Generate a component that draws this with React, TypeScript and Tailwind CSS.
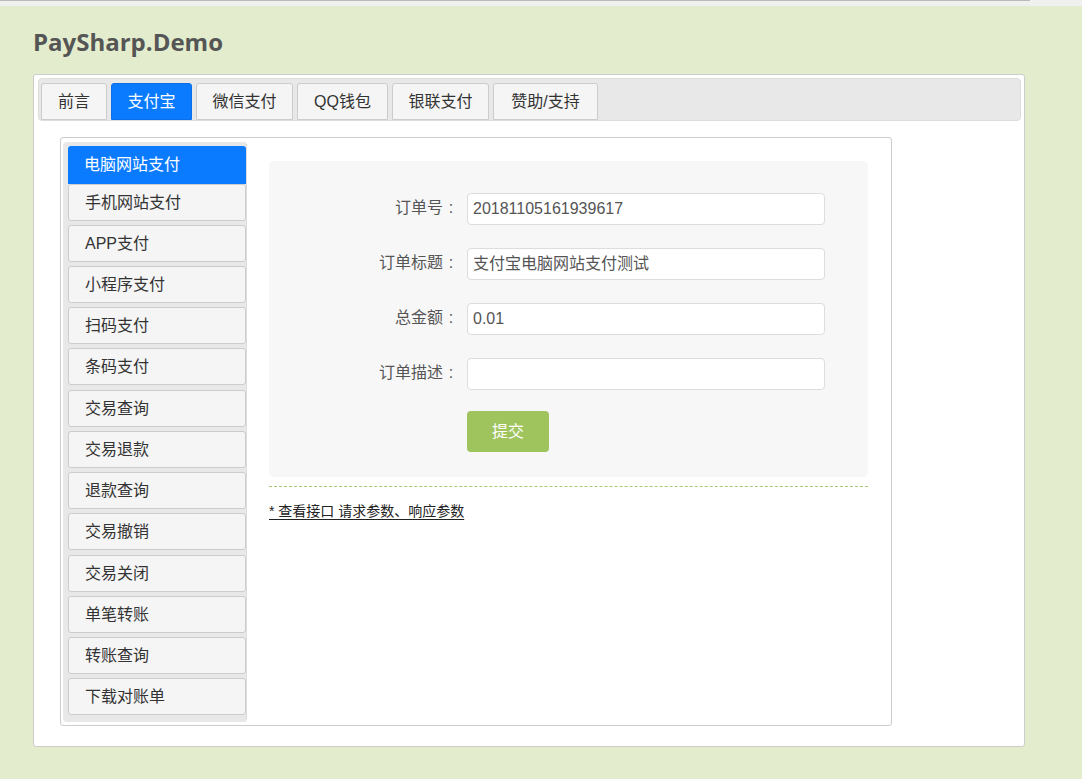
import React from "react";

const tabs: [string, number][] = [
  ["前言", 66],
  ["支付宝", 81],
  ["微信支付", 97],
  ["QQ钱包", 91],
  ["银联支付", 97],
  ["赞助/支持", 105],
];
const menu = [
  "电脑网站支付",
  "手机网站支付",
  "APP支付",
  "小程序支付",
  "扫码支付",
  "条码支付",
  "交易查询",
  "交易退款",
  "退款查询",
  "交易撤销",
  "交易关闭",
  "单笔转账",
  "转账查询",
  "下载对账单",
];

const fields: [string, string][] = [
  ["订单号", "20181105161939617"],
  ["订单标题", "支付宝电脑网站支付测试"],
  ["总金额", "0.01"],
  ["订单描述", ""],
];

export default function App() {
  return (
    <div
      className="min-h-screen w-full bg-[#e3edcd] text-[#333]"
      style={{ fontFamily: '"Liberation Sans", "Noto Sans CJK SC", sans-serif' }}
    >
      <div className="h-[6px] bg-[#f0f0f0]">
        <div className="h-px w-[1030px] bg-[#b9b9b9]" />
      </div>
      <div className="pl-[33px]">
        <h1
          className="mt-[21px] mb-[17px] text-[24px] leading-[30px] font-bold text-[#555]"
          style={{ fontFamily: '"Open Sans", sans-serif' }}
        >
          PaySharp.Demo
        </h1>
        <div className="w-[992px] h-[673px] rounded-[3px] border border-[#cccccc] bg-white pl-[4px] pr-[3px] pt-[3px]">
          <div className="flex gap-[4px] rounded-[4px] border border-[#dddddd] bg-[#e8e8e8] pl-[2px] pt-[4px]">
            {tabs.map(([t, w], i) => (
              <div
                key={t}
                style={{ width: w }}
                className={
                  "h-[37px] flex items-center justify-center rounded-t-[3px] border text-[16px] leading-[20px] " +
                  (i === 1
                    ? "bg-[#0a7bff] border-[#0a6fe8] text-white"
                    : "bg-[#f5f5f5] border-[#cccccc] text-[#333]")
                }
              >
                {t}
              </div>
            ))}
          </div>
          <div className="ml-[22px] mt-[16px] w-[832px] h-[589px] rounded-[3px] border border-[#cccccc] flex items-start">
            <div className="ml-[2px] mt-[4px] w-[184px] rounded-[4px] border-r border-[#dddddd] bg-[#e8e8e8] pl-[5px] pt-[4px] pb-[7px]">
              {menu.map((m, i) => (
                <div
                  key={m}
                  className={
                    "w-[178px] flex items-center pl-[16px] rounded-[3px] text-[16px] leading-[20px] " +
                    (i === 0
                      ? "h-[38px] bg-[#0a7bff] text-white rounded-b-none"
                      : i === 1
                      ? "h-[37px] bg-[#f5f5f5] border border-[#cccccc] text-[#333]"
                      : i === 6 || i === 10
                      ? "h-[37px] mt-[5px] bg-[#f5f5f5] border border-[#cccccc] text-[#333]"
                      : "h-[37px] mt-[4px] bg-[#f5f5f5] border border-[#cccccc] text-[#333]")
                  }
                >
                  {m}
                </div>
              ))}
            </div>
            <div className="ml-[22px] mt-[23px] w-[599px]">
              <div className="rounded-[5px] bg-[#f7f7f7] pt-[32px] pb-[25px]">
                {fields.map(([label, value], i) => (
                  <div key={label} className={"flex items-center " + (i > 0 ? "mt-[23px]" : "")}>
                    <div className="w-[190px] text-right text-[16px] leading-[20px] text-[#555] -mt-[3px]">
                      {label}
                      <span className="inline-block w-[16px] text-center">:</span>
                    </div>
                    <div className="ml-[8px] w-[358px] h-[32px] rounded-[4px] border border-[#dddddd] bg-white flex items-center pl-[5px] text-[16px] leading-[20px] text-[#555]">
                      {value}
                    </div>
                  </div>
                ))}
                <div className="mt-[21px] ml-[198px] w-[82px] h-[41px] rounded-[4px] bg-[#9fc45e] flex items-center justify-center text-white text-[16px] leading-[20px]">
                  提交
                </div>
              </div>
              <div className="mt-[9px] border-t border-dashed border-[#a8c878]" />
              <div className="mt-[14px] text-[14px] leading-[20px] text-[#222] underline underline-offset-[3px]">
                * 查看接口 请求参数、响应参数
              </div>
            </div>
          </div>
        </div>
      </div>
    </div>
  );
}
